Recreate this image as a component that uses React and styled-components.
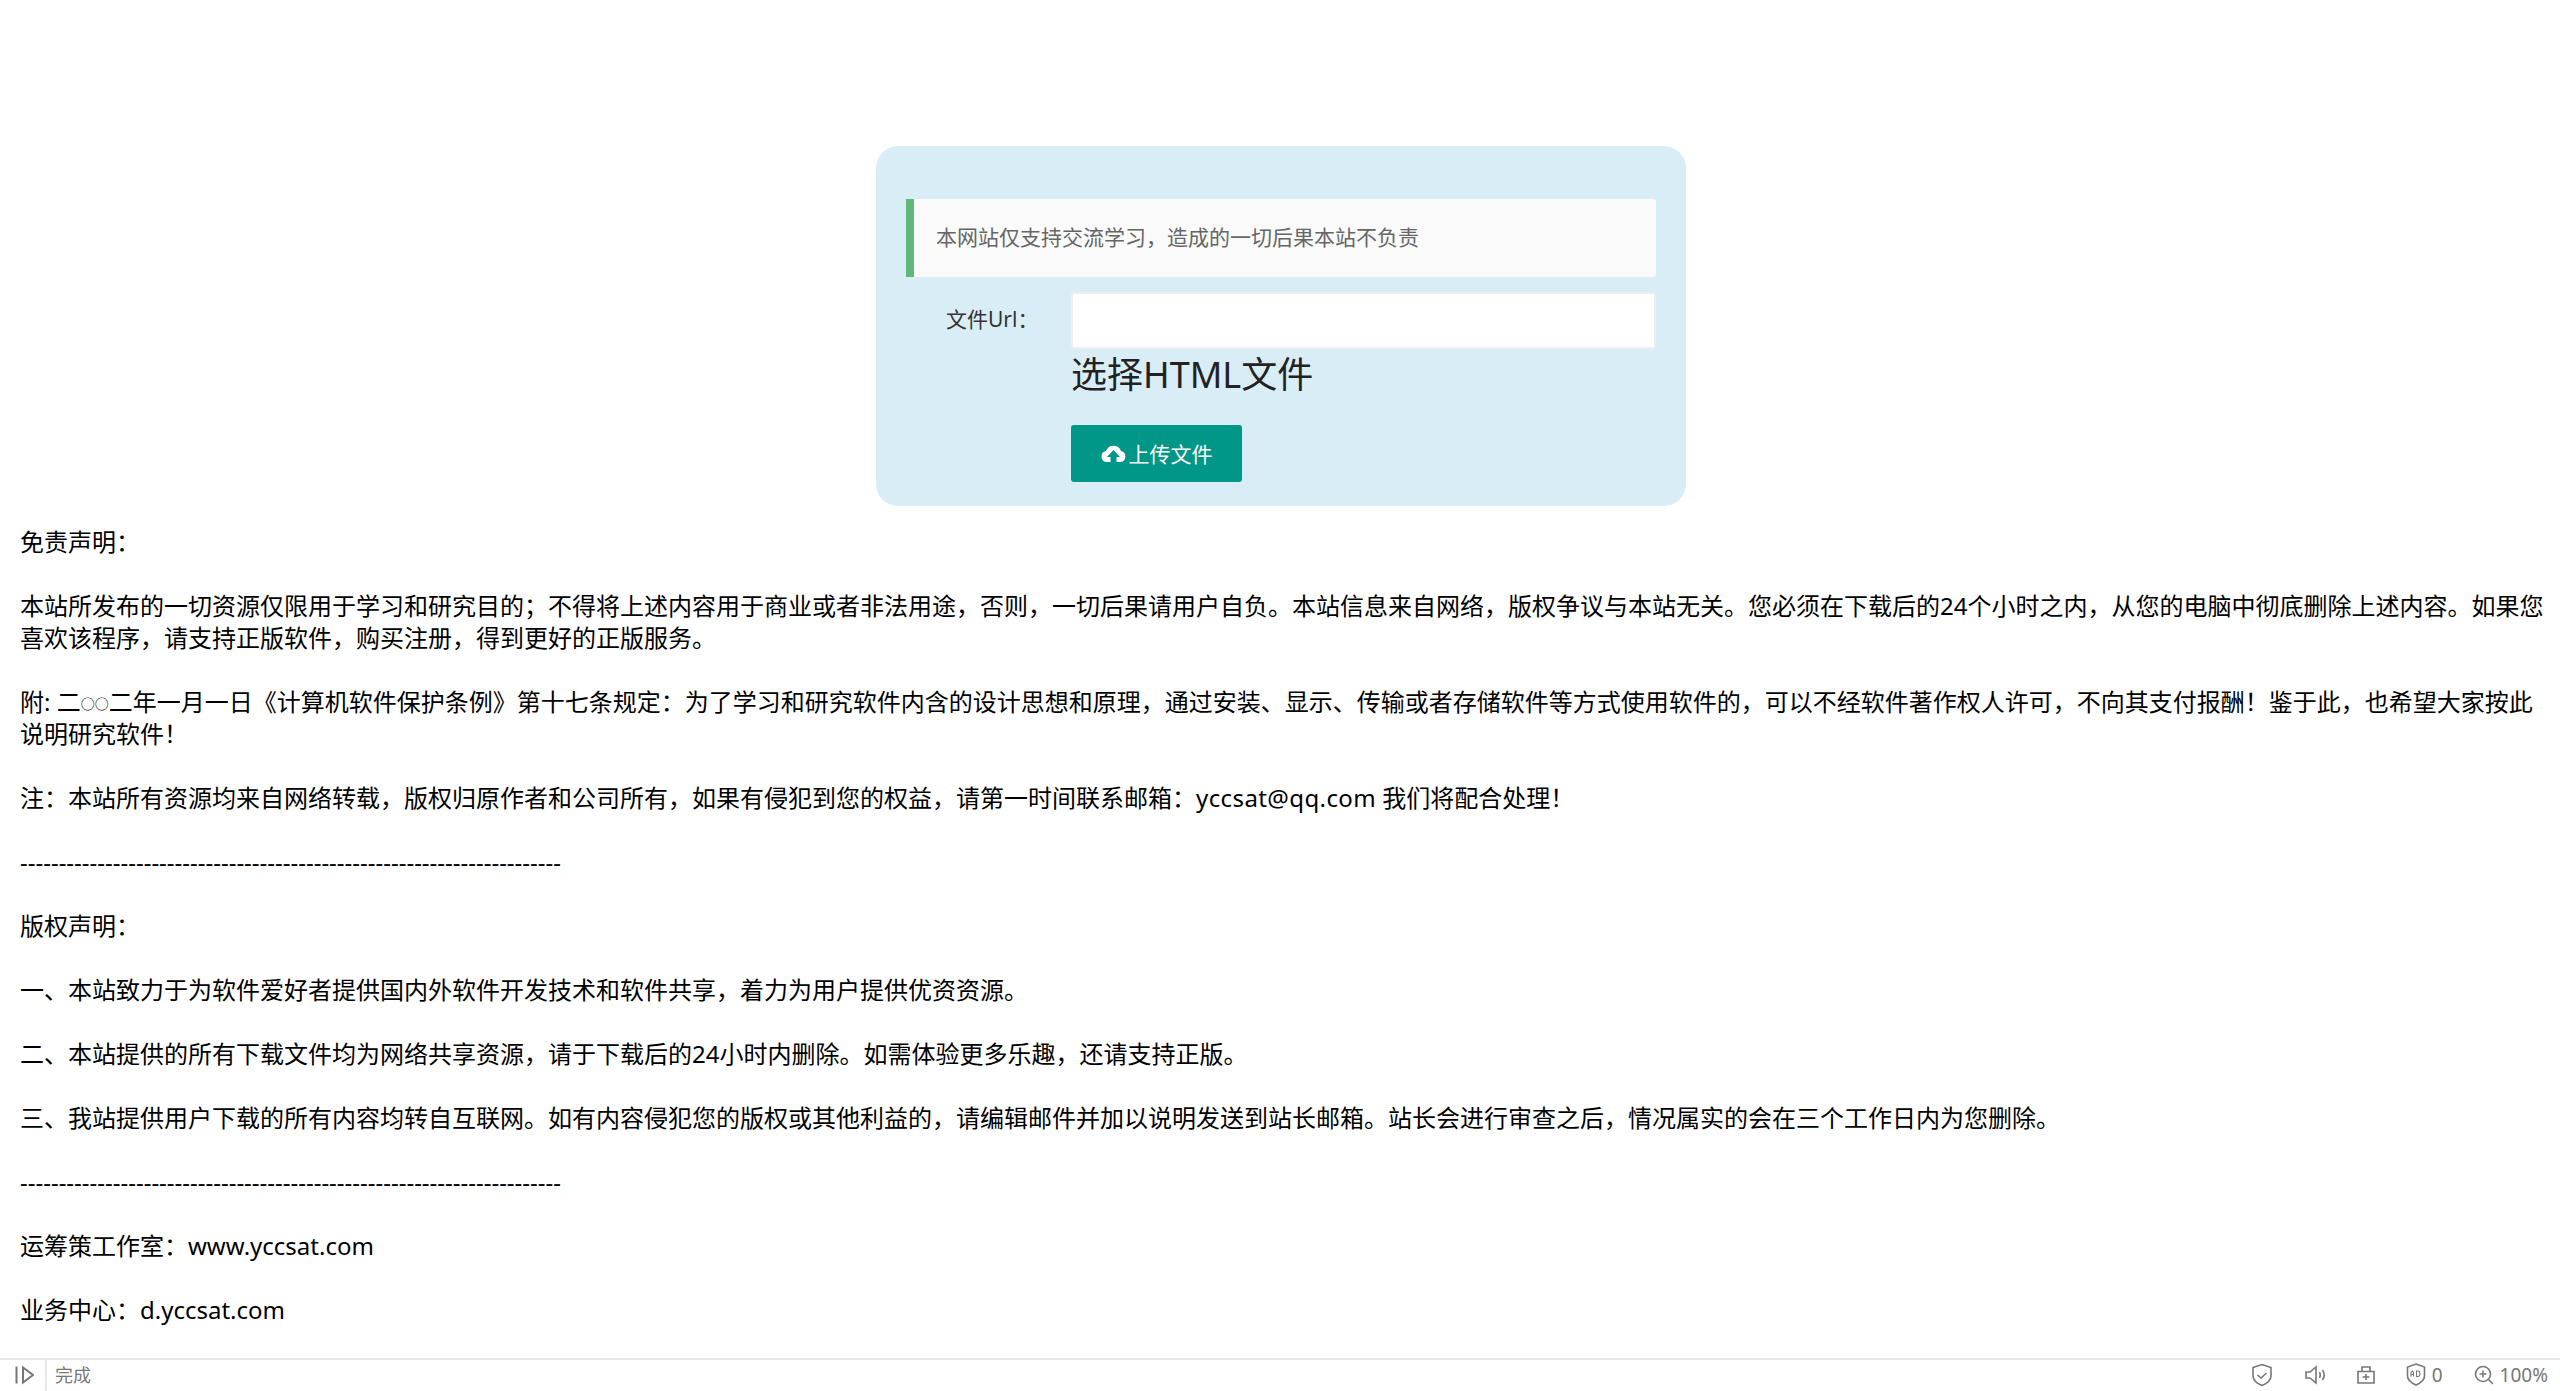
import React from 'react'
import styled, { createGlobalStyle } from 'styled-components'

const GlobalStyle = createGlobalStyle`
  html, body {
    margin: 0;
    padding: 0;
    height: 100%;
    background: #fff;
    overflow: hidden;
    font-family: "Noto Sans", "Noto Sans CJK SC", sans-serif;
  }
`

const Page = styled.div`
  display: flex;
  flex-direction: column;
  height: 100vh;
`

const Content = styled.main`
  flex: 1;
  min-height: 0;
  overflow: hidden;
  padding: 146px 18px 0 20px;
`

const Card = styled.section`
  box-sizing: border-box;
  width: 810px;
  height: 360px;
  margin: 0 auto 20px;
  padding: 53px 30px 0;
  background: #d9edf7;
  border-radius: 22px;
`

const Notice = styled.blockquote`
  box-sizing: border-box;
  height: 78px;
  margin: 0 0 15px;
  padding-left: 22px;
  background: #fafafa;
  border-left: 8px solid #5fb878;
  border-radius: 0 3px 3px 0;
  font-size: 21px;
  line-height: 76px;
  color: #666;
`

const FormRow = styled.div`
  display: flex;
  padding-left: 40px;
`

const Label = styled.label`
  width: 125px;
  height: 57px;
  line-height: 54px;
  font-size: 21px;
  color: #333;
`

const Fields = styled.div`
  flex: 1;
  min-width: 0;
`

const UrlInput = styled.input`
  display: block;
  box-sizing: border-box;
  width: 100%;
  height: 57px;
  background: #fff;
  border: 2px solid #eee;
  border-radius: 3px;
  outline: none;
`

const ChooseLabel = styled.div`
  height: 52px;
  margin-bottom: 24px;
  line-height: 52px;
  font-size: 36px;
  color: #222;
`

const UploadButton = styled.button`
  display: flex;
  align-items: center;
  justify-content: center;
  gap: 3px;
  width: 171px;
  height: 57px;
  padding: 0;
  background: #009688;
  border: 0;
  border-radius: 3px;
  color: #fff;
  font: inherit;
  font-size: 21px;
  line-height: 54px;
`

const Legal = styled.article`
  margin-right: -6px;
  font-size: 24px;
  line-height: 32px;
  color: #000;
`

const Para = styled.p`
  margin: 0 0 32px;
  white-space: ${(p) => (p.$rule ? 'nowrap' : 'normal')};
`

const SmallCircle = styled.span`
  display: inline-block;
  font-size: 14px;
  line-height: 14px;
  vertical-align: 2px;
`

const Email = styled.span`
  letter-spacing: 0.4px;
`

const StatusBar = styled.footer`
  flex: none;
  display: flex;
  align-items: center;
  box-sizing: border-box;
  height: 33px;
  border-top: 2px solid #e8e8e8;
  font-size: 18px;
  line-height: 28px;
  color: #777;
`

const PlayCell = styled.div`
  display: flex;
  align-items: center;
  justify-content: center;
  box-sizing: border-box;
  width: 47px;
  height: 100%;
  padding-bottom: 2px;
  border-right: 2px solid #e8e8e8;
`

const StatusText = styled.span`
  margin-left: 8px;
  padding-bottom: 2px;
`

const Tray = styled.div`
  display: flex;
  align-items: center;
  gap: 31px;
  margin-left: auto;
  padding: 0 12px 2px 0;
`

const TrayItem = styled.span`
  display: flex;
  align-items: center;
  gap: 6px;
  font-size: 19px;
`

const Icon = styled.svg`
  display: block;
  fill: none;
  stroke: #777;
  stroke-width: 1.6;
`

const dashes = '-'.repeat(70)

const paragraphs = [
  '免责声明\uFF1A',
  '本站所发布的一切资源仅限用于学习和研究目的\uFF1B不得将上述内容用于商业或者非法用途\uFF0C否则\uFF0C一切后果请用户自负。本站信息来自网络\uFF0C版权争议与本站无关。您必须在下载后的24个小时之内\uFF0C从您的电脑中彻底删除上述内容。如果您喜欢该程序\uFF0C请支持正版软件\uFF0C购买注册\uFF0C得到更好的正版服务。',
  <>
    附: 二<SmallCircle>○○</SmallCircle>
    {'二年一月一日《计算机软件保护条例》第十七条规定\uFF1A为了学习和研究软件内含的设计思想和原理\uFF0C通过安装、显示、传输或者存储软件等方式使用软件的\uFF0C可以不经软件著作权人许可\uFF0C不向其支付报酬\uFF01鉴于此\uFF0C也希望大家按此说明研究软件\uFF01'}
  </>,
  <>
    {'注\uFF1A本站所有资源均来自网络转载\uFF0C版权归原作者和公司所有\uFF0C如果有侵犯到您的权益\uFF0C请第一时间联系邮箱\uFF1A'}
    <Email>yccsat@qq.com</Email>
    {' 我们将配合处理\uFF01'}
  </>,
  dashes,
  '版权声明\uFF1A',
  '一、本站致力于为软件爱好者提供国内外软件开发技术和软件共享\uFF0C着力为用户提供优资资源。',
  '二、本站提供的所有下载文件均为网络共享资源\uFF0C请于下载后的24小时内删除。如需体验更多乐趣\uFF0C还请支持正版。',
  '三、我站提供用户下载的所有内容均转自互联网。如有内容侵犯您的版权或其他利益的\uFF0C请编辑邮件并加以说明发送到站长邮箱。站长会进行审查之后\uFF0C情况属实的会在三个工作日内为您删除。',
  dashes,
  '运筹策工作室\uFF1Awww.yccsat.com',
  '业务中心\uFF1Ad.yccsat.com',
]

function CloudIcon() {
  return (
    <svg width="25" height="17" viewBox="0 0 25 17" fill="#fff">
      <path d="M6 17a5.500 5.500 0 0 1-1-10.900A8 8 0 0 1 20 6a5.600 5.600 0 0 1-.5 11H15.500v-5h3.500L12.500 5 6 12h3.500v5z" />
    </svg>
  )
}

export default function App() {
  return (
    <Page>
      <GlobalStyle />
      <Content>
        <Card>
          <Notice>{'本网站仅支持交流学习\uFF0C造成的一切后果本站不负责'}</Notice>
          <FormRow>
            <Label>{'文件Url\uFF1A'}</Label>
            <Fields>
              <UrlInput type="text" />
              <ChooseLabel>选择HTML文件</ChooseLabel>
              <UploadButton>
                <CloudIcon />
                上传文件
              </UploadButton>
            </Fields>
          </FormRow>
        </Card>
        <Legal>
          {paragraphs.map((text, i) => (
            <Para key={i} $rule={text === dashes}>
              {text}
            </Para>
          ))}
        </Legal>
      </Content>
      <StatusBar>
        <PlayCell>
          <Icon width="22" height="20" viewBox="0 0 22 20">
            <path d="M4.500 1.500v17M11 2.500v15L21 10z" strokeWidth="2" />
          </Icon>
        </PlayCell>
        <StatusText>完成</StatusText>
        <Tray>
          <Icon width="22" height="24" viewBox="0 0 22 24">
            <path d="M11 1.500l9 3v8c0 5-4 8-9 10-5-2-9-5-9-10v-8z" />
            <path d="M6.500 12l3.500 3 5.500-5" />
          </Icon>
          <Icon width="22" height="22" viewBox="0 0 22 22">
            <path d="M2 8h4l6-5v16l-6-5H2zM15.500 8c1 2 1 4 0 6M18.500 6c2 3 2 7 0 10" />
          </Icon>
          <Icon width="18" height="18" viewBox="0 0 18 18">
            <path d="M1 5.500h16V17H1zM5 5.500V1h8v4.500M5.500 11h7M9 8v6" />
          </Icon>
          <TrayItem>
            <Icon width="20" height="23" viewBox="0 0 20 23">
              <path d="M10 1l8.500 3v9c0 4-4 7-8.500 9-4.500-2-8.500-5-8.500-9V4z" />
              <path d="M5 13.500V9.500l1.200-1.500 1.300 1.500v4M5 11.500h2.500M10.500 8v5.500h1.500c2.500 0 2.500-5.500 0-5.500z" strokeWidth="1.100" />
            </Icon>
            0
          </TrayItem>
          <TrayItem>
            <Icon width="20" height="20" viewBox="0 0 20 20">
              <circle cx="9" cy="9" r="7.500" />
              <path d="M14.500 14.500l4.500 4.500M5.500 9h7M9 5.500v7" />
            </Icon>
            100%
          </TrayItem>
        </Tray>
      </StatusBar>
    </Page>
  )
}
